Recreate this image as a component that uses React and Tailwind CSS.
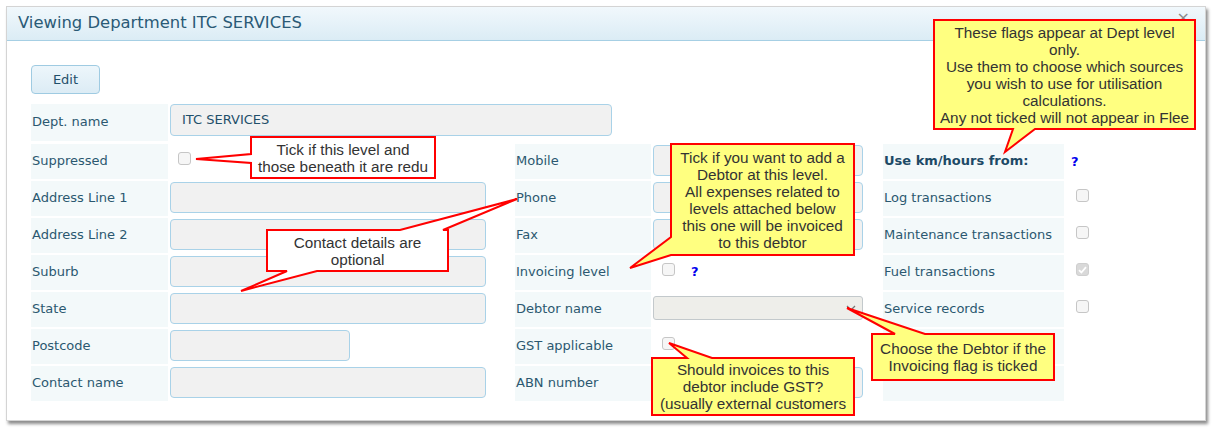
import React from "react";

const Label = ({ children, w, h = "h-[35px]", bold }) => (
  <div
    className={`${w} ${h} shrink-0 bg-[#f3f9fa] flex items-center pl-px pb-px text-[13px] ${
      bold ? "font-bold text-[#1d4a66]" : "text-[#2b5870]"
    } whitespace-nowrap overflow-hidden`}
  >
    {children}
  </div>
);

const Input = ({ w, h = "h-[31px]", children }) => (
  <div
    className={`${w} ${h} mt-px bg-[#f1f1f1] border border-[#a9d2e8] rounded-[4px] flex items-center pl-[11px] text-[13px] text-[#1f4f6a]`}
  >
    {children}
  </div>
);

const Check = ({ checked, className = "" }) => (
  <span
    className={`block w-[13px] h-[13px] rounded-[3px] border ${
      checked ? "bg-[#d9d9d9] border-[#cfcfcf]" : "bg-[#f6f6f6] border-[#c6c6c6]"
    } ${className} flex items-center justify-center`}
  >
    {checked && (
      <svg width="9" height="8" viewBox="0 0 9 8">
        <path d="M1 4.2 L3.4 6.5 L8 1.2" stroke="#fff" strokeWidth="1.8" fill="none" />
      </svg>
    )}
  </span>
);

const Q = ({ className = "" }) => (
  <span className={`text-[13px] font-bold text-[#0000ee] ${className}`}>?</span>
);

const Row = ({ children }) => <div className="flex gap-[2px] h-[35px]">{children}</div>;

const txt =
  "absolute flex flex-col items-center justify-center overflow-hidden font-['Liberation_Sans',Arial,sans-serif] text-[15.3px] leading-[17px] text-[#333] text-center whitespace-nowrap";

export default function App() {
  return (
    <div className="relative w-[1216px] h-[433px] bg-white pt-[6px] pl-[6px] font-['DejaVu_Sans',sans-serif] overflow-hidden">
      <div className="w-[1200px] h-[415px] bg-white border border-[#d4d4d4] shadow-[2px_3px_3px_rgba(0,0,0,0.45)]">
        {/* header */}
        <div className="h-[34px] flex items-center justify-between bg-gradient-to-b from-[#f1f8fc] to-[#dbecf5] border-b border-[#a6cfe4]">
          <div className="pl-[11px] pb-px text-[16.4px] text-[#2a5a76]">Viewing Department ITC SERVICES</div>
          <div className="self-start mt-[3px] mr-[15px] text-[16px] leading-none text-[#8a8a8a]">×</div>
        </div>
        {/* body */}
        <div className="pl-[24px] pt-[24px]">
          <div className="w-[69px] h-[29px] rounded-[4px] border border-[#9fcbe2] bg-gradient-to-b from-[#edf6fb] to-[#dcecf5] flex items-center justify-center text-[13px] text-[#1f4f6a]">
            Edit
          </div>
          <div className="mt-[10px] flex gap-[2px] h-[37px]">
            <Label w="w-[137px]" h="h-[37px]">Dept. name</Label>
            <div>
              <div className="w-[442px] h-[32px] bg-[#f1f1f1] border border-[#a9d2e8] rounded-[4px] flex items-center pl-[11px] text-[13px] text-[#1f4f6a]">
                ITC SERVICES
              </div>
            </div>
          </div>
          <div className="mt-[3px] flex">
            {/* col 1 */}
            <div className="w-[484px] flex flex-col gap-[2px]">
              <Row>
                <Label w="w-[137px]">Suppressed</Label>
                <div><Check className="mt-[8px] ml-[8px]" /></div>
              </Row>
              <Row>
                <Label w="w-[137px]">Address Line 1</Label>
                <Input w="w-[316px]" />
              </Row>
              <Row>
                <Label w="w-[137px]">Address Line 2</Label>
                <Input w="w-[316px]" />
              </Row>
              <Row>
                <Label w="w-[137px]">Suburb</Label>
                <Input w="w-[316px]" />
              </Row>
              <Row>
                <Label w="w-[137px]">State</Label>
                <Input w="w-[316px]" />
              </Row>
              <Row>
                <Label w="w-[137px]">Postcode</Label>
                <Input w="w-[180px]" />
              </Row>
              <Row>
                <Label w="w-[137px]">Contact name</Label>
                <Input w="w-[316px]" />
              </Row>
            </div>
            {/* col 2 */}
            <div className="w-[368px] flex flex-col gap-[2px]">
              <Row>
                <Label w="w-[136px]">Mobile</Label>
                <Input w="w-[210px]" />
              </Row>
              <Row>
                <Label w="w-[136px]">Phone</Label>
                <Input w="w-[210px]" />
              </Row>
              <Row>
                <Label w="w-[136px]">Fax</Label>
                <Input w="w-[210px]" />
              </Row>
              <Row>
                <Label w="w-[136px]">Invoicing level</Label>
                <div className="flex items-start">
                  <Check className="mt-[8px] ml-[9px]" />
                  <Q className="ml-[16px] mt-[7px]" />
                </div>
              </Row>
              <Row>
                <Label w="w-[136px]">Debtor name</Label>
                <div className="w-[210px] h-[24px] mt-[4px] bg-[#eeeeea] border border-[#c3c9cc] rounded-[3px] flex items-center justify-end pr-[6px]">
                  <svg width="10" height="6" viewBox="0 0 10 6">
                    <path d="M1 1 L5 5 L9 1" stroke="#777" strokeWidth="1.3" fill="none" />
                  </svg>
                </div>
              </Row>
              <Row>
                <Label w="w-[136px]">GST applicable</Label>
                <div><Check className="mt-[8px] ml-[9px]" /></div>
              </Row>
              <Row>
                <Label w="w-[136px]">ABN number</Label>
                <Input w="w-[210px]" />
              </Row>
            </div>
            {/* col 3 */}
            <div className="flex flex-col gap-[2px]">
              <Row>
                <Label w="w-[181px]" bold>Use km/hours from:</Label>
                <div className="flex items-center"><Q className="ml-[5px]" /></div>
              </Row>
              <Row>
                <Label w="w-[181px]">Log transactions</Label>
                <div><Check className="mt-[8px] ml-[10px]" /></div>
              </Row>
              <Row>
                <Label w="w-[181px]">Maintenance transactions</Label>
                <div><Check className="mt-[8px] ml-[10px]" /></div>
              </Row>
              <Row>
                <Label w="w-[181px]">Fuel transactions</Label>
                <div><Check checked className="mt-[8px] ml-[10px]" /></div>
              </Row>
              <Row>
                <Label w="w-[181px]">Service records</Label>
                <div><Check className="mt-[8px] ml-[10px]" /></div>
              </Row>
              <Row>
                <Label w="w-[181px]"></Label>
              </Row>
              <Row>
                <Label w="w-[181px]"></Label>
              </Row>
            </div>
          </div>
        </div>
      </div>

      {/* callout shapes */}
      <svg className="absolute left-0 top-0 pointer-events-none" width="1216" height="433" viewBox="0 0 1216 433">
        <g stroke="#ff0000" strokeWidth="2" strokeLinejoin="miter">
          <path fill="#ffffff" d="M251,137 L435,137 L435,178 L251,178 L251,163 L196,159 L251,154 Z" />
          <path fill="#ffffff" d="M267,230 L400,230 L517,199 L443,230 L448,230 L448,271 L317,271 L241,291 L287,271 L267,271 Z" />
          <path fill="#ffff80" d="M671,144 L854,144 L854,255 L671,255 L630,268 L671,237 Z" />
          <path fill="#ffff80" d="M934,20 L1195,20 L1195,129 L1035,129 L1005,152 L1013,129 L934,129 Z" />
          <path fill="#ffff80" d="M872,334 L895,334 L847,308 L925,334 L1054,334 L1054,380 L872,380 Z" />
          <path fill="#ffff80" d="M652,358 L687,358 L669,343 L712,358 L854,358 L854,415 L652,415 Z" />
        </g>
      </svg>

      {/* callout texts */}
      <div className={`${txt} left-[252px] top-[138px] w-[182px] h-[39px]`}>
        <div>Tick if this level and</div>
        <div>those beneath it are redu</div>
      </div>
      <div className={`${txt} left-[268px] top-[231px] w-[179px] h-[39px]`}>
        <div>Contact details are</div>
        <div>optional</div>
      </div>
      <div className={`${txt} left-[672px] top-[145px] w-[181px] h-[109px]`}>
        <div>Tick if you want to add a</div>
        <div>Debtor at this level.</div>
        <div>All expenses related to</div>
        <div>levels attached below</div>
        <div>this one will be invoiced</div>
        <div>to this debtor</div>
      </div>
      <div className={`${txt} left-[935px] top-[21px] w-[259px] h-[107px]`}>
        <div>These flags appear at Dept level</div>
        <div>only.</div>
        <div>Use them to choose which sources</div>
        <div>you wish to use for utilisation</div>
        <div>calculations.</div>
        <div>Any not ticked will not appear in Flee</div>
      </div>
      <div className={`${txt} left-[873px] top-[335px] w-[180px] h-[44px]`}>
        <div>Choose the Debtor if the</div>
        <div>Invoicing flag is ticked</div>
      </div>
      <div className={`${txt} left-[653px] top-[359px] w-[200px] h-[55px]`}>
        <div>Should invoices to this</div>
        <div>debtor include GST?</div>
        <div>(usually external customers</div>
      </div>
    </div>
  );
}
